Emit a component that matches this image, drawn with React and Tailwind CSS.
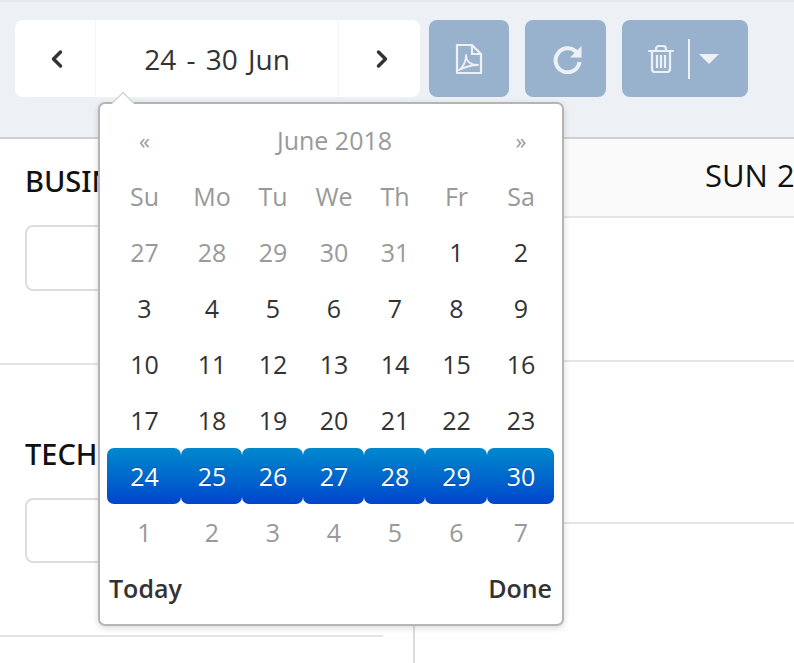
import React from "react";
import { ChevronLeft, ChevronRight } from "lucide-react";

const cols = "grid grid-cols-[74px_61px_61px_61px_61px_62px_67px]";
const head = ["Su", "Mo", "Tu", "We", "Th", "Fr", "Sa"];
const rows = [
  [["27", 1], ["28", 1], ["29", 1], ["30", 1], ["31", 1], ["1"], ["2"]],
  [["3"], ["4"], ["5"], ["6"], ["7"], ["8"], ["9"]],
  [["10"], ["11"], ["12"], ["13"], ["14"], ["15"], ["16"]],
  [["17"], ["18"], ["19"], ["20"], ["21"], ["22"], ["23"]],
];
const selected = ["24", "25", "26", "27", "28", "29", "30"];
const last = ["1", "2", "3", "4", "5", "6", "7"];

function Datepicker() {
  return (
    <div className="absolute left-[98px] top-[102px] w-[466px] h-[524px] bg-white border-2 border-[#b5b5b5] rounded-[7px] shadow-[0_2px_6px_rgba(0,0,0,0.15)] pl-[7px] pt-[8px] z-10">
      <div className="absolute left-[15px] top-[-9px] w-[16px] h-[16px] rotate-45 bg-white border-l border-t border-[#c8c8c8]" />
      <div className={`${cols} h-[56px] items-center text-center text-[#999999] text-[25px] relative`}>
        <span className="text-[22px] pl-[1px]">«</span>
        <span className="col-span-5 pl-[1px]">June 2018</span>
        <span className="text-[22px] pl-[1px]">»</span>
      </div>
      <div className={`${cols} h-[56px] items-center text-center text-[#999999]`}>
        {head.map((d) => <span key={d} className="pl-[1px]">{d}</span>)}
      </div>
      {rows.map((r, i) => (
        <div key={i} className={`${cols} h-[56px] items-center text-center`}>
          {r.map(([d, old]) => (
            <span key={d} className={old ? "pl-[1px] text-[#999999]" : "pl-[1px] text-[#333333]"}>{d}</span>
          ))}
        </div>
      ))}
      <div className={`${cols} h-[56px]`}>
        {selected.map((d) => (
          <span key={d} className="flex items-center justify-center pl-[1px] rounded-[7px] text-white bg-gradient-to-b from-[#0088cc] to-[#0044cc] [text-shadow:0_-1px_0_rgba(0,0,0,0.25)]">{d}</span>
        ))}
      </div>
      <div className={`${cols} h-[56px] items-center text-center text-[#999999]`}>
        {last.map((d) => <span key={d} className="pl-[1px]">{d}</span>)}
      </div>
      <div className="flex justify-between items-center h-[56px] w-[447px] pl-[2px] pr-[2px] font-semibold text-[#333333] text-[25px]">
        <span>Today</span>
        <span>Done</span>
      </div>
    </div>
  );
}

function Btn({ className, children }) {
  return <div className={`h-[77px] rounded-[8px] bg-[#98b2cd] flex items-center justify-center ${className}`}>{children}</div>;
}

export default function App() {
  return (
    <div className="relative w-[794px] h-[663px] overflow-hidden bg-white text-[25px] leading-none font-['Open_Sans','Noto_Sans',sans-serif] text-[#333333]">
      <div className="h-[139px] bg-[#edf0f4] border-b-2 border-[#cfcfcf] border-t-2 border-t-[#e6e9ec] pt-[18px] pl-[15px] flex">
        <div className="flex h-[77px] w-[405px] bg-white rounded-[8px]">
          <div className="w-[81px] pl-[4px] flex items-center justify-center border-r border-[#f5f5f5] text-[#333333]">
            <ChevronLeft size={28} strokeWidth={3} />
          </div>
          <div className="flex-1 flex items-center justify-center text-[28px] [word-spacing:3px]">24 - 30 Jun</div>
          <div className="w-[82px] pl-[4px] flex items-center justify-center border-l border-[#f5f5f5] text-[#333333]">
            <ChevronRight size={28} strokeWidth={3} />
          </div>
        </div>
        <Btn className="w-[80px] ml-[9px]">
          <svg width="28" height="32" viewBox="0 0 28 32" fill="none" stroke="#edf0f4" strokeWidth="2.2">
            <path d="M2 2h15l9 9v19H2z" strokeLinejoin="round" />
            <path d="M17 2v9h9" />
            <path d="M4 27c4-3 7-9 7-15 0 6 4 10 12 10-7 0-13 2-19 5z" strokeWidth="1.8" strokeLinejoin="round" />
          </svg>
        </Btn>
        <Btn className="w-[81px] ml-[16px] pl-[4px]">
          <svg width="30" height="30" viewBox="0 0 30 30" fill="none">
            <path d="M24.5 9.5A12 12 0 1 0 26.5 18" stroke="#edf0f4" strokeWidth="4" />
            <path d="M28.5 2v11.5H17z" fill="#edf0f4" />
          </svg>
        </Btn>
        <Btn className="w-[126px] ml-[16px] pr-[3px]">
          <svg width="26" height="28" viewBox="0 0 26 28" fill="none" stroke="#edf0f4" strokeWidth="2.2">
            <path d="M1 6h24" strokeLinecap="round" />
            <path d="M8 6V4a3 3 0 0 1 3-3h4a3 3 0 0 1 3 3v2" />
            <path d="M4 6v18a3 3 0 0 0 3 3h12a3 3 0 0 0 3-3V6" />
            <path d="M9 10v13M13 10v13M17 10v13" />
          </svg>
          <div className="w-[2px] h-[40px] bg-[#edf0f4] ml-[14px] mr-[9px]" />
          <div className="w-0 h-0 border-x-[10px] border-x-transparent border-t-[10px] border-t-[#edf0f4]" />
        </Btn>
      </div>
      <div className="flex h-[524px]">
        <div className="w-[415px] border-r-2 border-[#dcdcdc] shrink-0">
          <div className="h-[226px] border-b-2 border-[#e4e4e4] pl-[25px] pt-[24px]">
            <div className="h-[36px] text-[29px] leading-[36px] font-medium text-[#111111] font-['Noto_Sans',sans-serif]">BUSINESS</div>
            <div className="mt-[26px] w-[300px] h-[66px] border-2 border-[#dddddd] rounded-[8px]" />
          </div>
          <div className="h-[272px] w-[383px] border-b-2 border-[#e4e4e4] pl-[25px] pt-[71px]">
            <div className="h-[36px] text-[29px] leading-[36px] font-medium text-[#111111] font-['Noto_Sans',sans-serif]">TECH</div>
            <div className="mt-[26px] w-[300px] h-[65px] border-2 border-[#dddddd] rounded-[8px]" />
          </div>
        </div>
        <div className="flex-1 min-w-0">
          <div className="h-[79px] bg-[#fafafa] border-b-2 border-[#e4e4e4] text-[31px] [word-spacing:1px] text-[#111111] pl-[290px] pt-[18px] whitespace-nowrap leading-[36px]">SUN 24</div>
          <div className="h-[144px] border-b-2 border-[#e4e4e4]" />
          <div className="h-[162px] border-b-2 border-[#e4e4e4]" />
        </div>
      </div>
      <Datepicker />
    </div>
  );
}
